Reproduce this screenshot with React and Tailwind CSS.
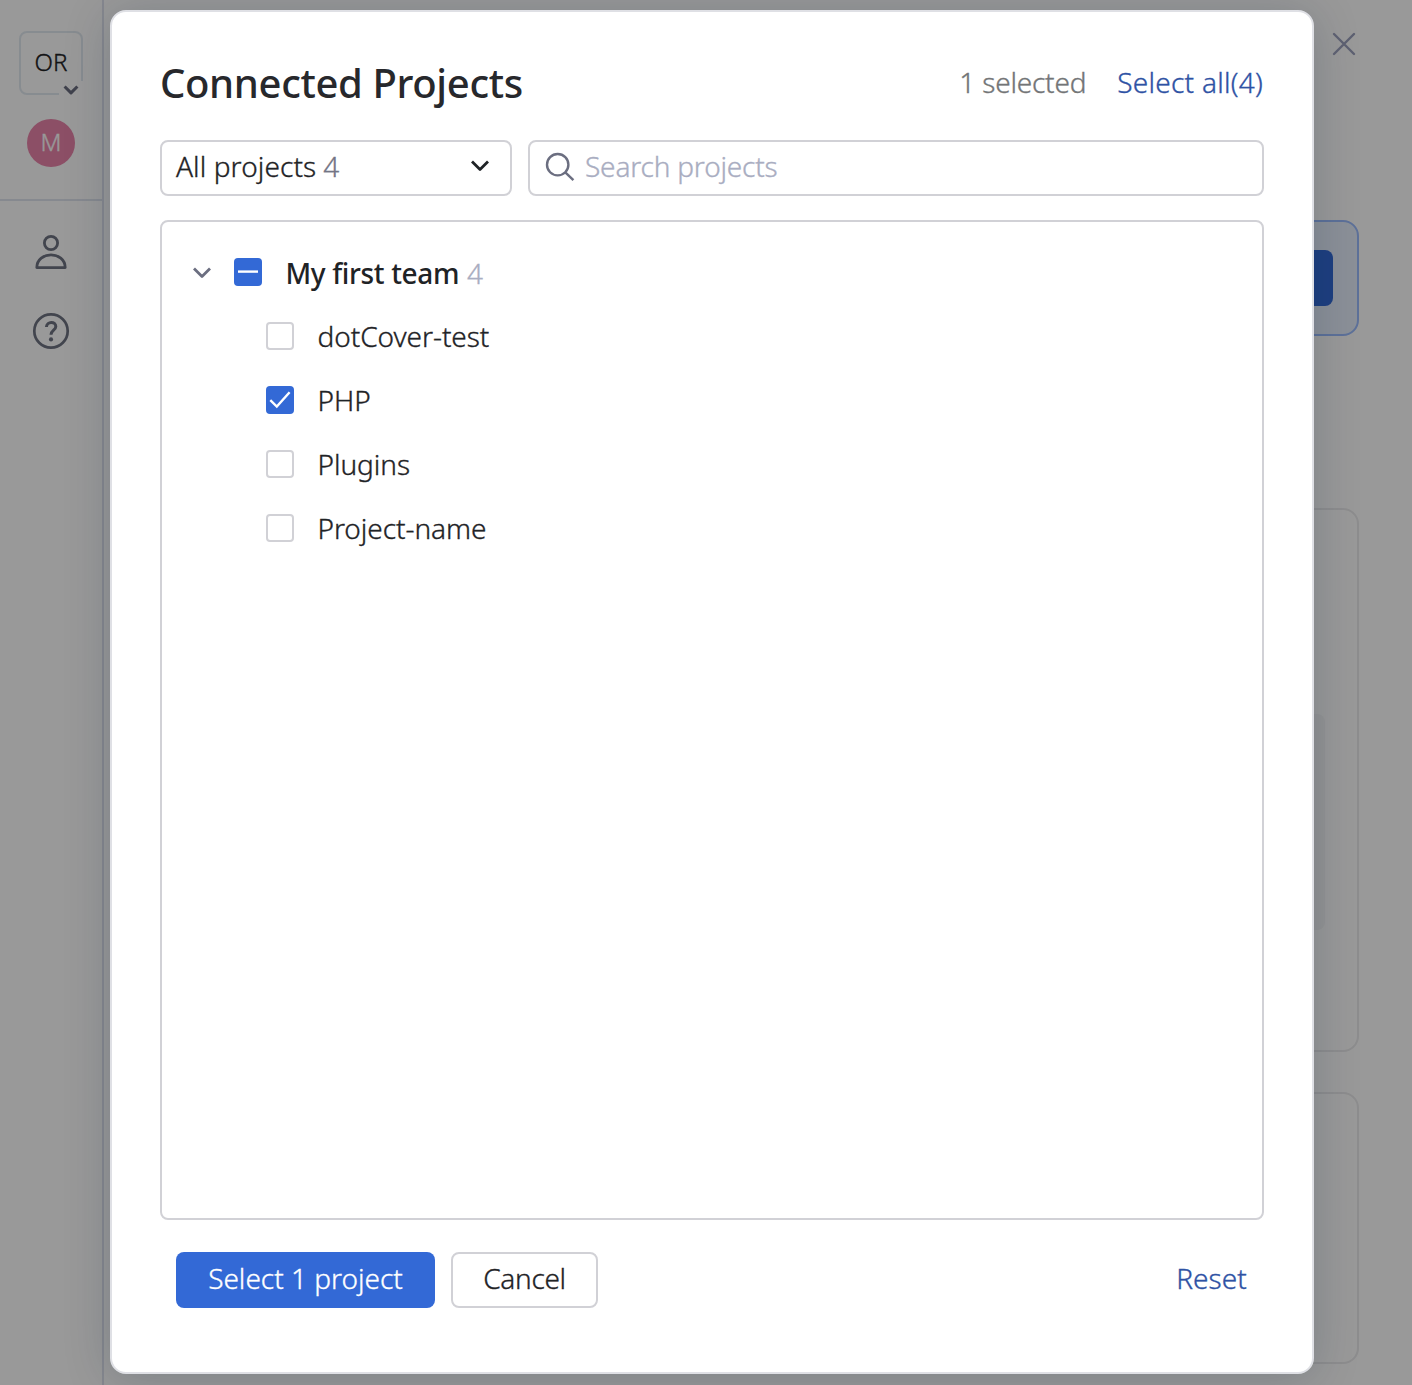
import React, { useState } from "react";

const PROJECTS = ["dotCover-test", "PHP", "Plugins", "Project-name"];

function Chevron({ className }) {
  return (
    <svg className={className} viewBox="0 0 20 12" fill="none" stroke="currentColor" strokeWidth="2.8">
      <path d="M2 1.6 L10 9.6 L18 1.6" strokeLinejoin="round" strokeLinecap="butt" />
    </svg>
  );
}

function Sidebar() {
  return (
    <aside className="flex w-[104px] shrink-0 flex-col border-r-2 border-[#dfe3ee]">
      <div className="flex h-[201px] flex-col items-center border-b-2 border-[#dfe5ee] pt-[31px]">
        <div className="relative flex h-16 w-16 items-center justify-center rounded-lg border-2 border-[#e2e9f1] text-[24px] leading-none text-[#1f2326]">
          <span className="-mt-[2px] tracking-[0.2px]">OR</span>
          <span className="absolute -right-[2px] -bottom-[2px] flex h-[14px] w-[24px] items-end justify-center bg-white">
            <Chevron className="h-[10px] w-[16px] text-[#6b6e80] [stroke-width:3.8]" />
          </span>
        </div>
        <div className="mt-6 flex h-12 w-12 items-center justify-center rounded-full bg-[#e984aa] pb-[2px] text-[24px] leading-none text-white">
          M
        </div>
      </div>
      <nav className="flex flex-col items-center pt-[31px] text-[#6f7382]">
        <svg className="h-10 w-10" viewBox="0 0 40 40" fill="none" stroke="currentColor" strokeWidth="2.8">
          <circle cx="20" cy="11" r="6.6" />
          <path d="M5.8 35.6 C5.8 18.6 34.2 18.6 34.2 35.6 Z" strokeLinejoin="round" />
        </svg>
        <svg className="mt-[39px] h-10 w-10" viewBox="0 0 40 40" fill="none" stroke="currentColor">
          <circle cx="20" cy="20" r="16.7" strokeWidth="2.7" />
          <path d="M15.4 16 C15.9 9.9 24.8 10 24.8 15.6 C24.8 19.2 20 19.4 20 23.8" strokeWidth="3" />
          <circle cx="20" cy="28.4" r="2.1" fill="currentColor" stroke="none" />
        </svg>
      </nav>
    </aside>
  );
}

function Backdrop() {
  return (
    <div className="flex h-full bg-white">
      <Sidebar />
      <main className="flex flex-1 flex-col pt-[220px] pr-[53px] pl-12">
        <div className="flex h-[116px] shrink-0 items-center justify-end rounded-[16px] border-2 border-[#9cbcff] bg-[#e8f0fe] pr-6">
          <div className="h-14 w-40 rounded-lg bg-[#3369d6]" />
        </div>
        <div className="mt-[172px] h-[544px] shrink-0 rounded-[16px] border-2 border-[#ebebed] px-8 pt-[204px]">
          <div className="h-[216px] rounded-lg bg-[#f7f7f8]" />
        </div>
        <div className="mt-10 h-[272px] shrink-0 rounded-[16px] border-2 border-[#ebebed]" />
      </main>
    </div>
  );
}

function Checkbox({ state, onClick }) {
  if (state === "off") {
    return <button onClick={onClick} className="h-7 w-7 rounded-[4px] border-2 border-[#d1d1d6] bg-white" />;
  }
  return (
    <button onClick={onClick} className="h-7 w-7 rounded-[4px] bg-[#3369d6] text-white">
      <svg className="h-7 w-7" viewBox="0 0 28 28" fill="none" stroke="currentColor" strokeWidth="2.4">
        {state === "on" ? <path d="M4.3 14.2 L10.8 20.6 L23.6 6.2" /> : <path d="M4 13.6 H24" />}
      </svg>
    </button>
  );
}

export default function App() {
  const [selected, setSelected] = useState(["PHP"]);
  const toggle = (name) =>
    setSelected((list) => (list.includes(name) ? list.filter((n) => n !== name) : [...list, name]));
  const teamState = selected.length === 0 ? "off" : selected.length === PROJECTS.length ? "on" : "partial";

  return (
    <div className="relative h-[1385px] w-[1412px] overflow-hidden font-['Noto_Sans',sans-serif] font-light [-webkit-text-stroke:0.35px_currentColor]">
      <Backdrop />
      <div className="absolute inset-0 bg-black/40 pt-[10px] pl-[110px]">
        <svg className="absolute top-8 left-[1332px] h-6 w-6 text-[#5c5f70]" viewBox="0 0 24 24" fill="none" stroke="currentColor" strokeWidth="2.4">
          <path d="M2 2 L22 22 M22 2 L2 22" strokeLinecap="round" />
        </svg>
        <section className="flex h-[1364px] w-[1204px] flex-col rounded-[16px] border-2 border-[#dfe0e5] bg-white px-12 pt-10 text-[28px] leading-10 text-[#1f2326] shadow-[0_4px_48px_rgba(0,28,54,0.2)]">
          <header className="flex h-[60px] items-center">
            <h1 className="mt-[1px] flex-1 text-[40px] leading-[60px] font-medium tracking-[-0.36px] text-[#27282c] [-webkit-text-stroke:0px]">
              Connected Projects
            </h1>
            <span className="-mt-[1px] tracking-[-0.2px] text-[#737577]">1 selected</span>
            <button
              onClick={() => setSelected(PROJECTS)}
              className="-mt-[1px] mr-[1px] ml-[31px] tracking-[0.25px] text-[#2e52a4]"
            >
              Select all(4)
            </button>
          </header>

          <div className="mt-[28px] flex gap-4">
            <button className="flex h-14 w-[352px] items-center rounded-lg border-2 border-[#d1d1d6] pr-[20px] pl-[14px]">
              <span className="-mt-[5px] tracking-[0.1px]">All projects</span>
              <span className="-mt-[5px] ml-[7px] flex-1 text-left text-[#737585]">4</span>
              <Chevron className="-mt-[4px] h-3 w-5" />
            </button>
            <label className="flex h-14 flex-1 items-center rounded-lg border-2 border-[#d1d1d6] px-[14px]">
              <svg className="-mt-[2px] h-8 w-8 text-[#6b6e80]" viewBox="0 0 32 32" fill="none" stroke="currentColor" strokeWidth="2.4">
                <circle cx="13.7" cy="13.7" r="10.7" />
                <path d="M21.3 21.3 L29.4 29.2" />
              </svg>
              <span className="-mt-[5px] ml-[9px] tracking-[-0.18px] text-[#a9adc1]">Search projects</span>
            </label>
          </div>

          <div className="mt-6 flex h-[1000px] flex-col rounded-lg border-2 border-[#d1d1d6] pt-[18px] pl-[30px]">
            <div className="flex h-16 items-center">
              <Chevron className="mt-[2px] h-3 w-5 text-[#6b6e80]" />
              <div className="ml-[22px] flex">
                <Checkbox
                  state={teamState}
                  onClick={() => setSelected(teamState === "on" ? [] : PROJECTS)}
                />
              </div>
              <span className="mt-[1px] ml-[23.5px] font-medium tracking-[-0.35px] [-webkit-text-stroke:0px]">My first team</span>
              <span className="mt-[1px] ml-[8px] text-[#a9adc1]">4</span>
            </div>
            {PROJECTS.map((name) => (
              <div key={name} className="flex h-16 items-center pl-[74px]">
                <Checkbox state={selected.includes(name) ? "on" : "off"} onClick={() => toggle(name)} />
                <span className="ml-[23.5px] tracking-[-0.05px]">{name}</span>
              </div>
            ))}
          </div>

          <footer className="mt-8 flex items-center px-4">
            <button className="h-14 w-[259px] rounded-lg bg-[#3369d6] pb-[5px] text-white">
              Select {selected.length} project
            </button>
            <button className="ml-4 h-14 w-[147px] rounded-lg border-2 border-[#d1d1d6] pb-[5px] tracking-[-0.3px]">Cancel</button>
            <button onClick={() => setSelected([])} className="mr-[1px] ml-auto pb-[5px] tracking-[0.1px] text-[#2e52a4]">
              Reset
            </button>
          </footer>
        </section>
      </div>
    </div>
  );
}
